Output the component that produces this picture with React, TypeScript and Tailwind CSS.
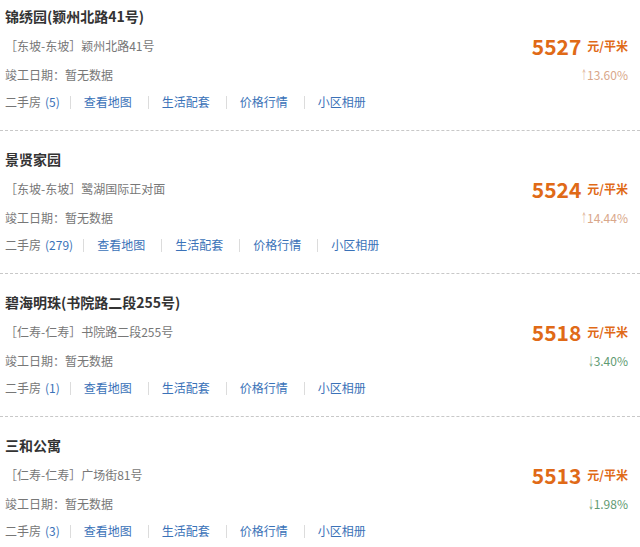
const estates = [
  { name: '锦绣园(颖州北路41号)', area: '东坡-东坡', addr: '颖州北路41号', count: 5, price: 5527, change: '13.60%', up: true },
  { name: '景贤家园', area: '东坡-东坡', addr: '鹭湖国际正对面', count: 279, price: 5524, change: '14.44%', up: true },
  { name: '碧海明珠(书院路二段255号)', area: '仁寿-仁寿', addr: '书院路二段255号', count: 1, price: 5518, change: '3.40%', up: false },
  { name: '三和公寓', area: '仁寿-仁寿', addr: '广场街81号', count: 3, price: 5513, change: '1.98%', up: false },
];

const links = ['查看地图', '生活配套', '价格行情', '小区相册'];

const Sep = () => <span className="inline-block w-px h-[13px] bg-[#dcdcdc]" />;

export default function App() {
  return (
    <div
      className="w-[640px] h-[547px] overflow-hidden bg-white"
      style={{ fontFamily: '"Microsoft YaHei", "Noto Sans CJK SC", sans-serif' }}
    >
      {estates.map((e, i) => (
        <div
          key={i}
          className={`flex justify-between pl-[5px] pr-[12px] pb-[14px] ${i === 0 ? 'pt-[2px]' : 'pt-[14px]'} ${
            i < estates.length - 1 ? 'border-b border-dashed border-[#c8c8c8]' : ''
          }`}
        >
          <div>
            <div className="h-[28px] flex items-center text-[14px] font-bold text-[#333]">{e.name}</div>
            <div className="h-[32px] flex items-center text-[12px] text-[#777]">
              <span>［{e.area}］</span>
              <span>{e.addr}</span>
            </div>
            <div className="h-[26px] flex items-center text-[12px] text-[#777]">竣工日期：暂无数据</div>
            <div className="h-[28px] flex items-center text-[12px]">
              <span className="text-[#777]">二手房</span>
              <span className="ml-[4px] text-[#3a72b8]">({e.count})</span>
              <span className="ml-[10px] flex items-center">
                <Sep />
              </span>
              {links.map((l, j) => (
                <span key={l} className="flex items-center">
                  <span className="pl-[13px] pr-[16px] text-[#3a72b8]">{l}</span>
                  {j < links.length - 1 && <Sep />}
                </span>
              ))}
            </div>
          </div>
          <div className="flex flex-col items-end">
            <div className="h-[28px]" />
            <div className="h-[32px] flex items-center">
              <span className="text-[21px] font-bold text-[#e06a17] leading-none">{e.price}</span>
              <span className="ml-[6px] text-[12px] font-bold text-[#e06a17]">元/平米</span>
            </div>
            <div
              className={`h-[26px] flex items-center text-[12px] ${e.up ? 'text-[#d9a78a]' : 'text-[#5f9a72]'}`}
            >
              <span className="inline-block w-[6px] origin-left scale-x-[0.5]">{e.up ? '↑' : '↓'}</span>
              <span>{e.change}</span>
            </div>
          </div>
        </div>
      ))}
    </div>
  );
}
